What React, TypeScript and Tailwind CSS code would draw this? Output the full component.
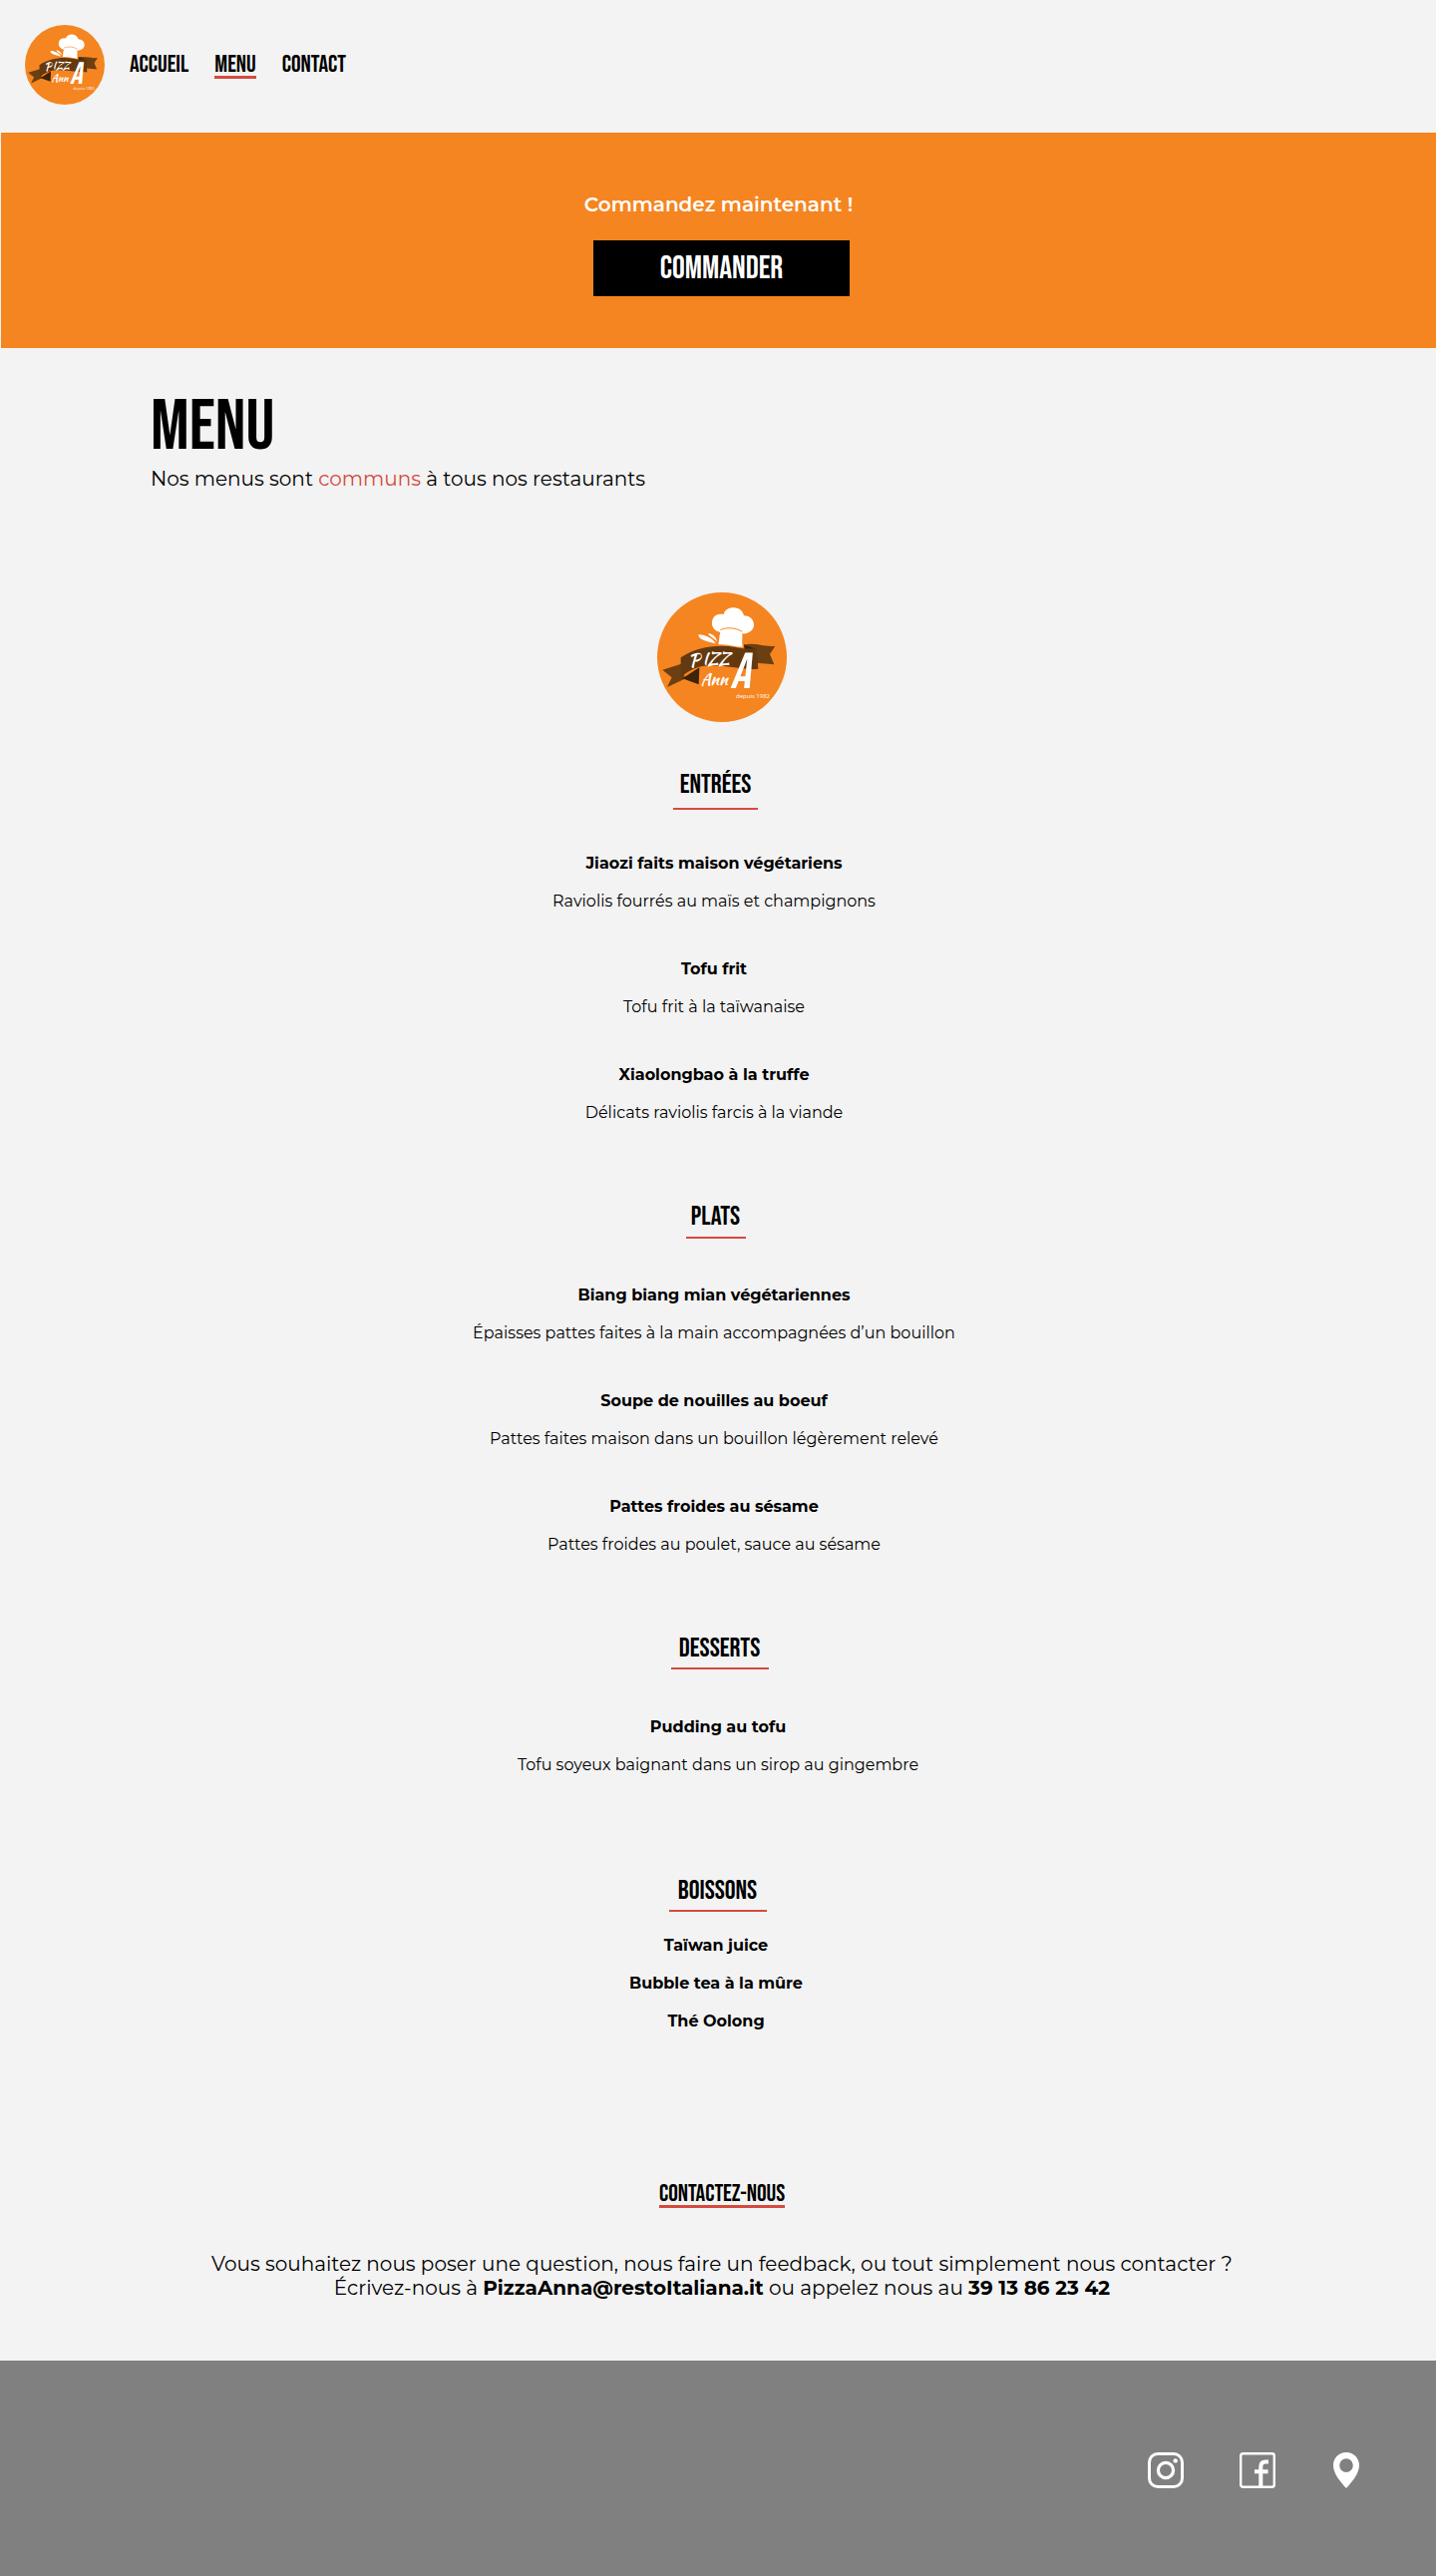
type Dish = { name: string; description?: string };
type MenuSection = {
  title: string;
  sectionClass: string;
  titleClass: string;
  listClass: string;
  dishes: Dish[];
};

const sections: MenuSection[] = [
  {
    title: "Entrées",
    sectionClass: "mt-[47px] pr-2",
    titleClass: "w-[85px] pb-[7px]",
    listClass: "mt-11 gap-12",
    dishes: [
      { name: "Jiaozi faits maison végétariens", description: "Raviolis fourrés au maïs et champignons" },
      { name: "Tofu frit", description: "Tofu frit à la taïwanaise" },
      { name: "Xiaolongbao à la truffe", description: "Délicats raviolis farcis à la viande" },
    ],
  },
  {
    title: "Plats",
    sectionClass: "mt-[78px] pr-2",
    titleClass: "w-[60px] pb-1",
    listClass: "mt-11 gap-12",
    dishes: [
      { name: "Biang biang mian végétariennes", description: "Épaisses pattes faites à la main accompagnées d’un bouillon" },
      { name: "Soupe de nouilles au boeuf", description: "Pattes faites maison dans un bouillon légèrement relevé" },
      { name: "Pattes froides au sésame", description: "Pattes froides au poulet, sauce au sésame" },
    ],
  },
  {
    title: "Desserts",
    sectionClass: "mt-[78px]",
    titleClass: "w-[98px] pb-[3px]",
    listClass: "mt-11 gap-12",
    dishes: [{ name: "Pudding au tofu", description: "Tofu soyeux baignant dans un sirop au gingembre" }],
  },
  {
    title: "Boissons",
    sectionClass: "mt-[100px] pr-1",
    titleClass: "w-[98px] pb-[3px]",
    listClass: "mt-5 gap-[18px]",
    dishes: [{ name: "Taïwan juice" }, { name: "Bubble tea à la mûre" }, { name: "Thé Oolong" }],
  },
];

function Logo({ className }: { className: string }) {
  return (
    <svg viewBox="57 42 390 390" className={className} role="img" aria-label="Pizza Anna depuis 1982">
      <circle cx="252" cy="237" r="195" fill="#f58520" />
      <path d="M73 275 L134 256 L140 302 L87 327 L101 298 Z" fill="#6b3f12" />
      <path d="M133 301 L184 268 L182 319 Z" fill="#3d2308" />
      <path d="M318 200 C350 192 382 207 412 203 L396 228 L409 259 L356 254 Z" fill="#6b3f12" />
      <path d="M318 199 L356 213 L358 256 L322 240 Z" fill="#3d2308" />
      <path d="M128 238 C178 205 238 198 292 207 C318 212 340 213 356 210 L361 272 C318 276 270 262 224 262 C186 262 162 270 128 297 Z" fill="#64390f" />
      <path
        d="M247 162 C226 158 217 138 224 122 C229 109 243 105 257 108 C260 94 274 87 288 88 C304 89 314 97 318 112 C337 112 349 126 348 142 C346 158 330 168 313 166 C314 180 311 192 314 206 C291 206 265 196 241 199 C244 187 243 174 247 162 Z"
        fill="#fff"
      />
      <path d="M247 155 C267 146 292 148 313 160" fill="none" stroke="#f58520" strokeWidth="3" />
      <path d="M181 169 C194 168 223 177 233 196 C214 191 181 187 181 169 Z M210 166 C222 164 235 176 238 192 C231 180 215 177 210 166 Z" fill="#fff" />
      <g fill="#fff" fontFamily='"Kaushan Script", "Caveat Brush", "Open Sans", sans-serif'>
        <text x="154" y="268" fontSize="54" transform="rotate(-8 154 268)">P</text>
        <text x="194" y="258" fontSize="48">IZZ</text>
        <text x="188" y="320" fontSize="48">Ann</text>
        <text x="276" y="330" fontSize="152" fontStyle="italic" fontFamily='"Bebas Neue", "Open Sans Condensed", sans-serif'>A</text>
        <text x="294" y="359" fontSize="18" fontFamily='"Open Sans", sans-serif'>
          depuis 1982
        </text>
      </g>
    </svg>
  );
}

function InstagramIcon() {
  return (
    <svg viewBox="0 0 36 36" className="h-9 w-9" fill="none" stroke="#fff" aria-hidden="true">
      <rect x="1.5" y="1.5" width="33" height="33" rx="8.5" strokeWidth="3" />
      <circle cx="18" cy="18" r="7.6" strokeWidth="3.2" />
      <circle cx="27.7" cy="8.4" r="2.2" fill="#fff" stroke="none" />
    </svg>
  );
}

function FacebookIcon() {
  return (
    <svg viewBox="0 0 36 36" className="h-9 w-9" fill="none" stroke="#fff" aria-hidden="true">
      <rect x="1.2" y="1.2" width="33.6" height="33.6" rx="2.2" strokeWidth="2.4" />
      <path d="M21.3 35 V14.5 Q21.3 9.6 26 9.6 H29" strokeWidth="4" />
      <path d="M15 19.3 H28.6" strokeWidth="4" />
    </svg>
  );
}

function PinIcon() {
  return (
    <svg viewBox="0 0 30 36" className="h-9 w-[30px]" aria-hidden="true">
      <path
        fill="#fff"
        fillRule="evenodd"
        d="M15 0 C7.6 0 2 5.8 2 13 C2 21.5 9.5 30 15 36 C20.5 30 28 21.5 28 13 C28 5.8 22.4 0 15 0 Z M15 6.3 A6.8 6.8 0 1 1 15 19.9 A6.8 6.8 0 1 1 15 6.3 Z"
      />
    </svg>
  );
}

const display = "font-['Bebas_Neue','Open_Sans_Condensed','Roboto_Condensed',sans-serif] font-normal uppercase";
const underlined = "h-7 border-b-3 text-2xl leading-7";

export default function App() {
  return (
    <div className="bg-[#f3f3f3] font-['Montserrat','Open_Sans',sans-serif] text-black">
      <header className="flex items-center gap-[25px] px-[25px] pt-[25px] pb-7">
        <a href="#accueil" className="shrink-0">
          <Logo className="size-20" />
        </a>
        <nav className={`flex gap-[26px] ${display}`}>
          <a href="#accueil" className={`border-transparent ${underlined}`}>Accueil</a>
          <a href="#menu" aria-current="page" className={`border-[#d44b3e] ${underlined}`}>Menu</a>
          <a href="#contact" className={`border-transparent ${underlined}`}>Contact</a>
        </nav>
      </header>

      <section className="ml-px flex flex-col items-center bg-[#f58520] pt-15 pb-[52px]">
        <p className="text-xl leading-6 font-semibold text-white">Commandez maintenant !</p>
        <div className="mt-6 pl-1.5">
          <button type="button" className={`h-14 w-[257px] bg-black pt-0.5 text-[32px] text-white ${display}`}>
            Commander
          </button>
        </div>
      </section>

      <main id="menu">
        <div className="px-[151px] pt-[41px]">
          <h1 className={`text-7xl leading-[78px] ${display}`}>Menu</h1>
          <p className="text-xl leading-6">
            Nos menus sont <span className="text-[#d44b3e]">communs</span> à tous nos restaurants
          </p>
        </div>

        <div className="mt-[102px] flex justify-center pl-2">
          <Logo className="size-[130px]" />
        </div>

        {sections.map((section) => (
          <section key={section.title} className={`flex flex-col items-center text-center ${section.sectionClass}`}>
            <div className="h-[41px] pl-[3px]">
              <h2 className={`border-b-2 border-[#d44b3e] text-[27px] leading-8 ${section.titleClass} ${display}`}>
                {section.title}
              </h2>
            </div>
            <ul className={`flex flex-col ${section.listClass}`}>
              {section.dishes.map((dish) => (
                <li key={dish.name}>
                  <h3 className="text-base leading-5 font-bold">{dish.name}</h3>
                  {dish.description && <p className="mt-[18px] text-base leading-5">{dish.description}</p>}
                </li>
              ))}
            </ul>
          </section>
        ))}

        <section id="contact" className="mt-[149px] flex flex-col items-center pb-[61px] pl-2 text-center">
          <h2 className={`border-[#d44b3e] ${underlined} ${display}`}>Contactez-nous</h2>
          <p className="mt-11 text-xl leading-6">
            Vous souhaitez nous poser une question, nous faire un feedback, ou tout simplement nous contacter ?
            <br />
            Écrivez-nous à <strong>PizzaAnna@restoItaliana.it</strong> ou appelez nous au <strong>39 13 86 23 42</strong>
          </p>
        </section>
      </main>

      <footer className="flex justify-end gap-14 bg-[#808080] pt-23 pr-[75px] pb-22">
        <a href="#instagram" aria-label="Instagram"><InstagramIcon /></a>
        <a href="#facebook" aria-label="Facebook"><FacebookIcon /></a>
        <a href="#adresse" aria-label="Adresse"><PinIcon /></a>
      </footer>
    </div>
  );
}
